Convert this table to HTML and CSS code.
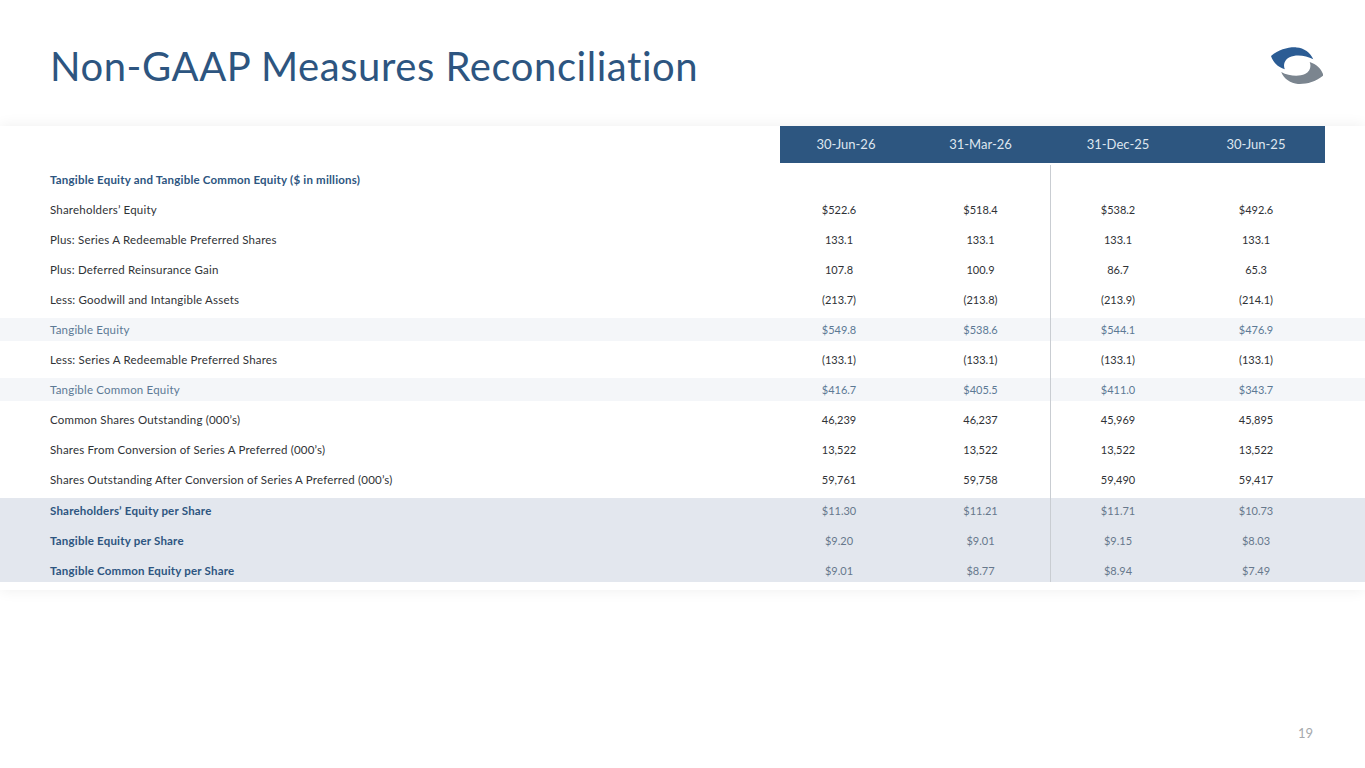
FILE: index.html
```html
<!DOCTYPE html>
<html>
<head>
<meta charset="utf-8">
<link rel="stylesheet" href="styles.css">
</head>
<body>
<div class="slide">
  <header class="top">
    <h1 class="title">Non-GAAP Measures Reconciliation</h1>
    <svg class="logo" width="52" height="37" viewBox="0 0 52 37">
      <path fill="#2b5c94" d="M0,9 C8,2.5 17,0 25.5,0.4 C33,0.8 39.5,5.5 42.3,12.3 C35,8.3 25,7.2 18.5,10.2 C13.5,12.8 12,17.5 13.8,22.3 C6.5,20 2,15 0,9 Z"/>
      <path fill="#7b858f" d="M0,9 C8,2.5 17,0 25.5,0.4 C33,0.8 39.5,5.5 42.3,12.3 C35,8.3 25,7.2 18.5,10.2 C13.5,12.8 12,17.5 13.8,22.3 C6.5,20 2,15 0,9 Z" transform="rotate(180 26 18.4) translate(-0.5 -0.5)"/>
    </svg>
  </header>

  <section class="card">
    <div class="row head">
      <div class="cell label"></div>
      <div class="cell hcol">30-Jun-26</div>
      <div class="cell hcol">31-Mar-26</div>
      <div class="cell hcol">31-Dec-25</div>
      <div class="cell hcol">30-Jun-25</div>
    </div>
    <div class="body">
      <div class="row section">
        <div class="cell label">Tangible Equity and Tangible Common Equity ($ in millions)</div>
        <div class="cell v first"></div><div class="cell v"></div><div class="cell v"></div><div class="cell v"></div>
      </div>
      <div class="row">
        <div class="cell label">Shareholders’ Equity</div>
        <div class="cell v first">$522.6</div><div class="cell v">$518.4</div><div class="cell v">$538.2</div><div class="cell v">$492.6</div>
      </div>
      <div class="row">
        <div class="cell label">Plus: Series A Redeemable Preferred Shares</div>
        <div class="cell v first">133.1</div><div class="cell v">133.1</div><div class="cell v">133.1</div><div class="cell v">133.1</div>
      </div>
      <div class="row">
        <div class="cell label">Plus: Deferred Reinsurance Gain</div>
        <div class="cell v first">107.8</div><div class="cell v">100.9</div><div class="cell v">86.7</div><div class="cell v">65.3</div>
      </div>
      <div class="row">
        <div class="cell label">Less: Goodwill and Intangible Assets</div>
        <div class="cell v first">(213.7)</div><div class="cell v">(213.8)</div><div class="cell v">(213.9)</div><div class="cell v">(214.1)</div>
      </div>
      <div class="row subtotal">
        <div class="cell label">Tangible Equity</div>
        <div class="cell v first">$549.8</div><div class="cell v">$538.6</div><div class="cell v">$544.1</div><div class="cell v">$476.9</div>
      </div>
      <div class="row">
        <div class="cell label">Less: Series A Redeemable Preferred Shares</div>
        <div class="cell v first">(133.1)</div><div class="cell v">(133.1)</div><div class="cell v">(133.1)</div><div class="cell v">(133.1)</div>
      </div>
      <div class="row subtotal">
        <div class="cell label">Tangible Common Equity</div>
        <div class="cell v first">$416.7</div><div class="cell v">$405.5</div><div class="cell v">$411.0</div><div class="cell v">$343.7</div>
      </div>
      <div class="row">
        <div class="cell label">Common Shares Outstanding (000’s)</div>
        <div class="cell v first">46,239</div><div class="cell v">46,237</div><div class="cell v">45,969</div><div class="cell v">45,895</div>
      </div>
      <div class="row">
        <div class="cell label">Shares From Conversion of Series A Preferred (000’s)</div>
        <div class="cell v first">13,522</div><div class="cell v">13,522</div><div class="cell v">13,522</div><div class="cell v">13,522</div>
      </div>
      <div class="row">
        <div class="cell label">Shares Outstanding After Conversion of Series A Preferred (000’s)</div>
        <div class="cell v first">59,761</div><div class="cell v">59,758</div><div class="cell v">59,490</div><div class="cell v">59,417</div>
      </div>
      <div class="pershare">
        <div class="row">
          <div class="cell label">Shareholders’ Equity per Share</div>
          <div class="cell v first">$11.30</div><div class="cell v">$11.21</div><div class="cell v">$11.71</div><div class="cell v">$10.73</div>
        </div>
        <div class="row">
          <div class="cell label">Tangible Equity per Share</div>
          <div class="cell v first">$9.20</div><div class="cell v">$9.01</div><div class="cell v">$9.15</div><div class="cell v">$8.03</div>
        </div>
        <div class="row">
          <div class="cell label">Tangible Common Equity per Share</div>
          <div class="cell v first">$9.01</div><div class="cell v">$8.77</div><div class="cell v">$8.94</div><div class="cell v">$7.49</div>
        </div>
      </div>
    </div>
  </section>

  <footer class="foot">19</footer>
</div>
</body>
</html>
```

FILE: styles.css
```css
* { box-sizing: border-box; }
html, body {
  margin: 0;
  padding: 0;
  background: #ffffff;
  width: 1365px;
  height: 768px;
  overflow: hidden;
  font-family: Lato, "Noto Sans", sans-serif;
}
.slide {
  width: 1365px;
  height: 768px;
  display: flex;
  flex-direction: column;
}
.top {
  display: flex;
  justify-content: space-between;
  align-items: flex-start;
  padding: 42px 42px 0 50px;
  height: 126px;
}
.title {
  margin: 0;
  font-weight: 400;
  font-size: 40px;
  line-height: 48px;
  color: #2d5580;
  letter-spacing: 0.55px;
}
.logo {
  margin-top: 5px;
  display: block;
}
.card {
  background: #fff;
  box-shadow: 0 0 14px rgba(0, 0, 0, 0.07);
  padding-bottom: 8px;
}
.row {
  display: grid;
  grid-template-columns: 780px 132px 137px 138px 138px 40px;
  height: 23px;
  align-items: center;
  font-size: 11px;
  color: #2f3236;
}
.cell {
  white-space: nowrap;
}
.label {
  padding-left: 50px;
  font-size: 11.5px;
  letter-spacing: 0.2px;
}
.v {
  text-align: center;
}
.v.first {
  padding-right: 14px;
}
.head {
  height: 37px;
  font-size: 13px;
}
.head .hcol {
  background: #2d5680;
  color: #dfe6ef;
  height: 37px;
  line-height: 37px;
  text-align: center;
}
.body {
  position: relative;
  display: flex;
  flex-direction: column;
  gap: 7px;
  padding-top: 5px;
}
.body::after {
  content: "";
  position: absolute;
  left: 1050px;
  top: 2px;
  bottom: 0;
  width: 1px;
  background: #c9cdd2;
}
.section .label {
  font-weight: 700;
  color: #2d5580;
}
.subtotal {
  background: #f4f6f9;
  color: #5c7995;
}
.pershare {
  background: #e3e7ee;
  display: flex;
  flex-direction: column;
  gap: 7px;
  padding: 1px 0 0;
}
.pershare .label {
  font-weight: 700;
  color: #2d5580;
}
.pershare .v {
  color: #67788c;
}
.foot {
  margin-top: auto;
  padding: 0 52px 27px 0;
  text-align: right;
  font-size: 13px;
  color: #a6a9ad;
}
```
